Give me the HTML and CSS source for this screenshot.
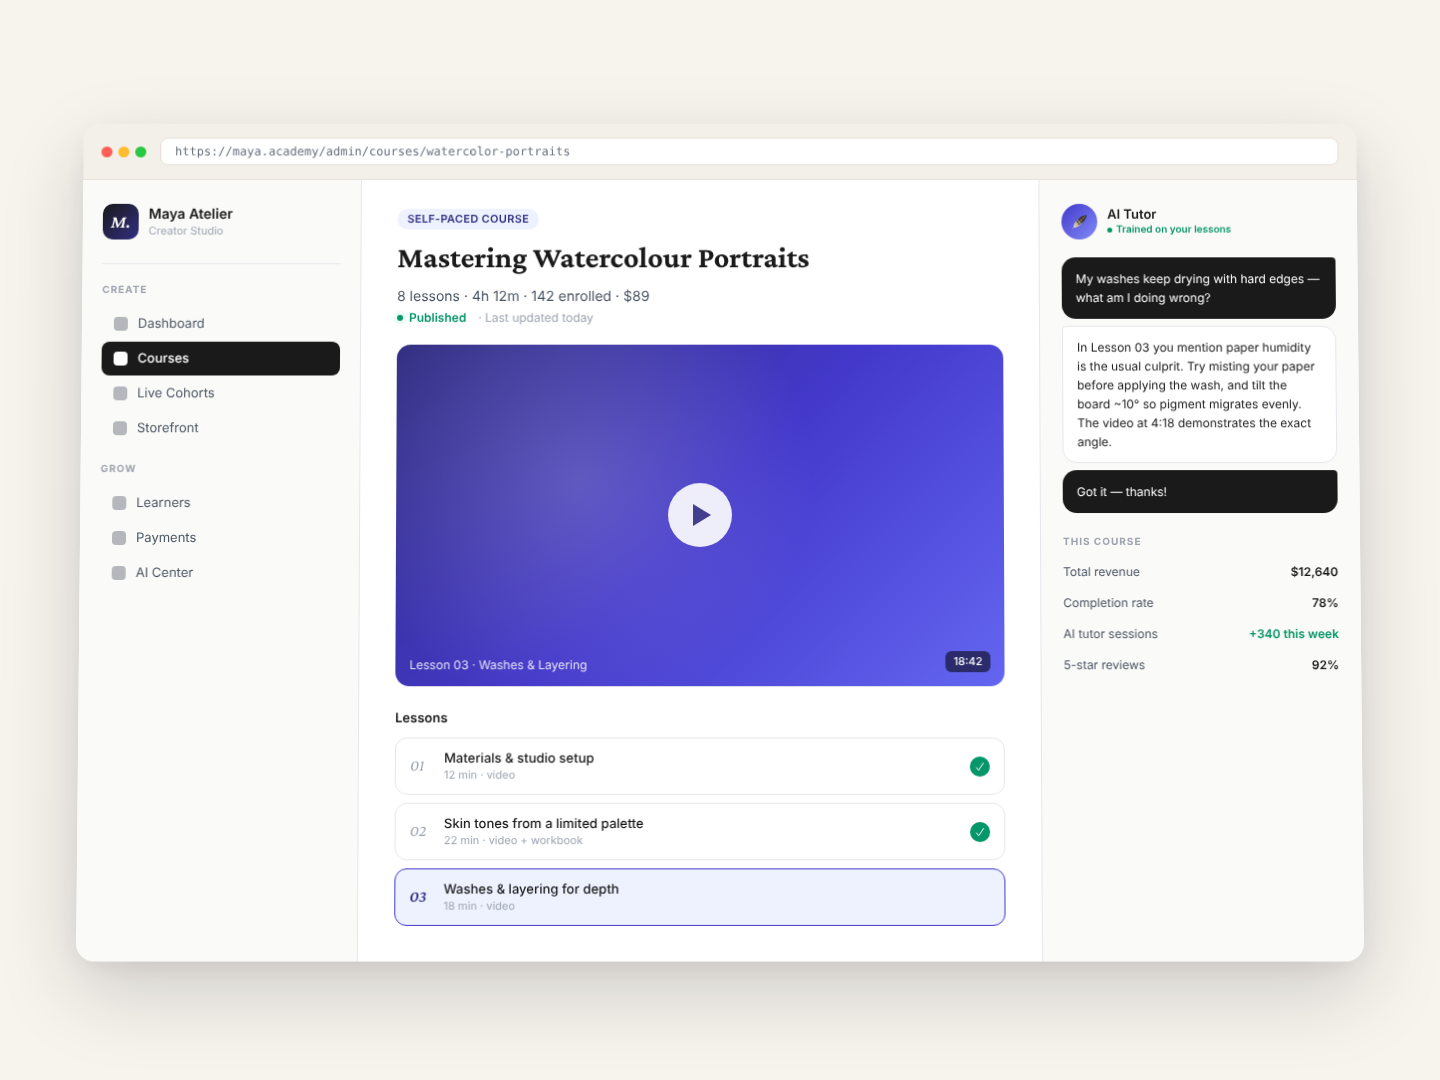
FILE: index.html
```html
<!DOCTYPE html>
<html lang="en">
<head>
<meta charset="utf-8">
<meta name="viewport" content="width=device-width, initial-scale=1">
<title>Maya Atelier – Courses</title>
<link rel="stylesheet" href="styles.css">
</head>
<body>
<div class="window">
  <header class="toolbar">
    <div class="lights"><span class="light light-close"></span><span class="light light-min"></span><span class="light light-max"></span></div>
    <input class="address" type="text" aria-label="Address" value="https://maya.academy/admin/courses/watercolor-portraits">
  </header>
  <div class="columns">
    <aside class="sidebar">
      <div class="brand">
        <div class="logo">M.</div>
        <div class="brand-text">
          <div class="brand-name">Maya Atelier</div>
          <div class="brand-sub">Creator Studio</div>
        </div>
      </div>
      <nav class="nav">
        <h2 class="eyebrow">Create</h2>
        <a class="nav-item" href="#"><span class="nav-icon"></span>Dashboard</a>
        <a class="nav-item active" href="#" aria-current="page"><span class="nav-icon"></span>Courses</a>
        <a class="nav-item" href="#"><span class="nav-icon"></span>Live Cohorts</a>
        <a class="nav-item" href="#"><span class="nav-icon"></span>Storefront</a>
        <h2 class="eyebrow">Grow</h2>
        <a class="nav-item" href="#"><span class="nav-icon"></span>Learners</a>
        <a class="nav-item" href="#"><span class="nav-icon"></span>Payments</a>
        <a class="nav-item" href="#"><span class="nav-icon"></span>AI Center</a>
      </nav>
    </aside>
    <main class="course">
      <span class="tag">SELF-PACED COURSE</span>
      <h1 class="title">Mastering Watercolour Portraits</h1>
      <p class="facts">8 lessons · 4h 12m · 142 enrolled · $89</p>
      <p class="status"><span class="dot"></span><strong class="published">Published</strong><span class="updated">· Last updated today</span></p>
      <div class="video">
        <button class="play" type="button" aria-label="Play lesson">
          <svg width="18" height="22" viewBox="0 0 18 22" aria-hidden="true"><path d="M0 0L18 11L0 22Z" fill="#423e88"/></svg>
        </button>
        <div class="caption">
          <span class="caption-title">Lesson 03 · Washes &amp; Layering</span>
          <span class="duration">18:42</span>
        </div>
      </div>
      <h2 class="lessons-title">Lessons</h2>
      <ol class="lessons">
        <li class="lesson">
          <span class="num">01</span>
          <div class="lesson-text"><div class="lesson-name">Materials &amp; studio setup</div><div class="lesson-meta">12 min · video</div></div>
          <span class="check"><svg width="10" height="10" viewBox="0 0 10 10" aria-hidden="true"><path d="M1.2 5.6L3.7 8.6L8.6 1.2" fill="none" stroke="#fff" stroke-width="1"/></svg></span>
        </li>
        <li class="lesson">
          <span class="num">02</span>
          <div class="lesson-text"><div class="lesson-name">Skin tones from a limited palette</div><div class="lesson-meta">22 min · video + workbook</div></div>
          <span class="check"><svg width="10" height="10" viewBox="0 0 10 10" aria-hidden="true"><path d="M1.2 5.6L3.7 8.6L8.6 1.2" fill="none" stroke="#fff" stroke-width="1"/></svg></span>
        </li>
        <li class="lesson current">
          <span class="num">03</span>
          <div class="lesson-text"><div class="lesson-name">Washes &amp; layering for depth</div><div class="lesson-meta">18 min · video</div></div>
        </li>
      </ol>
    </main>
    <aside class="tutor">
      <div class="tutor-head">
        <div class="avatar">
          <svg width="16" height="16" viewBox="0 0 16 16" aria-hidden="true">
            <defs>
              <linearGradient id="quill" x1="1" y1="0" x2="0" y2="1">
                <stop offset="0" stop-color="#1c1917"/>
                <stop offset="0.4" stop-color="#4a3d33"/>
                <stop offset="0.65" stop-color="#b0a595"/>
                <stop offset="1" stop-color="#e8e4dc"/>
              </linearGradient>
            </defs>
            <path d="M15.4 1.2C12 1.4 8.6 3.4 5.6 6.6C3.4 9 1.8 11.4 2.2 13.8C4.6 14.2 7.4 13 10 10.4C13 7.4 15 4.6 15.4 1.2Z" fill="url(#quill)"/>
            <path d="M7.4 5.2L10.4 9.2M5.6 7.2L8 11M9.6 3.6L12 7.2" stroke="#1c1917" stroke-width="1" fill="none"/>
            <path d="M14 2.4L0.8 15.4" stroke="#c9b48c" stroke-width="0.7" fill="none"/>
          </svg>
        </div>
        <div>
          <div class="tutor-name">AI Tutor</div>
          <div class="tutor-status"><span class="tutor-dot"></span>Trained on your lessons</div>
        </div>
      </div>
      <div class="chat">
        <p class="bubble mine">My washes keep drying with hard edges — what am I doing wrong?</p>
        <p class="bubble theirs">In Lesson 03 you mention paper humidity is the usual culprit. Try misting your paper before applying the wash, and tilt the board ~10° so pigment migrates evenly. The video at 4:18 demonstrates the exact angle.</p>
        <p class="bubble mine">Got it — thanks!</p>
      </div>
      <h2 class="eyebrow stats-title">This course</h2>
      <dl class="stats">
        <div class="stat"><dt>Total revenue</dt><dd>$12,640</dd></div>
        <div class="stat"><dt>Completion rate</dt><dd>78%</dd></div>
        <div class="stat"><dt>AI tutor sessions</dt><dd class="up">+340 this week</dd></div>
        <div class="stat"><dt>5-star reviews</dt><dd>92%</dd></div>
      </dl>
    </aside>
  </div>
</div>
</body>
</html>
```
FILE: styles.css
```css
:root {
  --ink: #1a1a1a;
  --slate: #4b5563;
  --muted: #9ca3af;
  --line: #e5e7eb;
  --indigo: #312e81;
  --violet: #4338ca;
  --tint: #eef2ff;
  --green: #059669;
  --serif: "Crimson Pro", "Crimson Text", "Liberation Serif", serif;
}
* { box-sizing: border-box; margin: 0; padding: 0; }
body {
  min-height: 100vh;
  display: flex;
  align-items: center;
  justify-content: center;
  padding: 80px;
  background: #f7f4ed;
  color: var(--ink);
  font-family: Inter, "Liberation Sans", sans-serif;
  font-size: 13px;
  text-rendering: geometricPrecision;
}
.window {
  width: 100%;
  max-width: 1280px;
  background: #fff;
  border-radius: 18px;
  overflow: hidden;
  transform: perspective(2400px) rotateX(2deg);
  box-shadow: 0 30px 80px rgba(26, 26, 46, .18), 0 8px 24px rgba(26, 26, 46, .06);
}
.toolbar {
  display: flex;
  align-items: center;
  gap: 14px;
  padding: 14px 18px;
  background: #f3efe9;
  border-bottom: 1px solid #e5e0d5;
}
.lights { display: flex; gap: 6px; }
.light { width: 11px; height: 11px; border-radius: 50%; }
.light-close { background: #ff5f57; }
.light-min { background: #febc2e; }
.light-max { background: #28c840; }
.address {
  flex: 1;
  min-width: 0;
  height: 28px;
  padding: 0 14px;
  border: 1px solid #e5e0d5;
  border-radius: 8px;
  background: #fff;
  color: #6b7280;
  font-family: "DejaVu Sans Mono", monospace;
  font-size: 12px;
  text-rendering: inherit;
}
.columns { display: grid; grid-template-columns: 280px minmax(0, 1fr) 320px; }

.sidebar { padding: 24px 20px; background: #fafaf8; border-right: 1px solid var(--line); }
.brand { display: flex; align-items: center; gap: 10px; padding-bottom: 24px; border-bottom: 1px solid var(--line); }
.logo {
  display: grid;
  place-items: center;
  width: 36px;
  height: 36px;
  border-radius: 10px;
  background: linear-gradient(135deg, #1a1a1a, #312e81);
  color: #fff;
  font: italic 600 18px/20px var(--serif);
}
.brand-name { font-size: 14px; line-height: 17px; font-weight: 600; }
.brand-sub { font-size: 11px; line-height: 16px; color: var(--muted); }
.nav { display: flex; flex-direction: column; gap: 1px; padding-top: 20px; }
.eyebrow { font-size: 10px; line-height: 12px; font-weight: 700; letter-spacing: 1px; text-transform: uppercase; color: var(--muted); }
.nav .eyebrow { margin-bottom: 10px; }
.nav-item + .eyebrow { margin-top: 17px; }
.nav-item {
  display: flex;
  align-items: center;
  gap: 10px;
  height: 34px;
  padding: 0 12px;
  border-radius: 8px;
  color: var(--slate);
  font-size: 13px;
  text-decoration: none;
}
.nav-icon { width: 14px; height: 14px; border-radius: 4px; background: currentColor; opacity: .4; }
.nav-item.active { background: var(--ink); color: #fff; font-weight: 500; }
.active .nav-icon { opacity: 1; }

.course { padding: 29px 36px 35px; background: #fff; }
.tag {
  display: inline-block;
  padding: 4px 10px;
  border-radius: 999px;
  background: var(--tint);
  color: var(--indigo);
  font-size: 11px;
  line-height: 13px;
  font-weight: 600;
  letter-spacing: .03em;
}
.title { margin-top: 12px; font: 700 30px/34px var(--serif); }
.facts { margin-top: 12px; font-size: 14px; line-height: 20px; color: var(--slate); }
.status { display: flex; align-items: center; margin-top: 3px; font-size: 12px; line-height: 16px; }
.dot { width: 6px; height: 6px; margin-right: 6px; border-radius: 50%; background: var(--green); box-shadow: 0 0 0 4px #ecfdf5; }
.published { color: var(--green); font-weight: 600; }
.updated { margin-left: 12px; color: var(--muted); }
.video {
  display: grid;
  place-items: center;
  position: relative;
  margin-top: 19px;
  aspect-ratio: 16 / 9;
  border-radius: 14px;
  background:
    radial-gradient(circle at 30% 40%, rgba(255, 255, 255, .18), transparent 50%),
    linear-gradient(135deg, #312e81 0%, #4338ca 50%, #6366f1 100%);
}
.play {
  display: grid;
  place-items: center;
  width: 64px;
  height: 64px;
  padding-left: 4px;
  border: 0;
  border-radius: 50%;
  background: #fff;
  opacity: .9;
}
.caption {
  position: absolute;
  right: 14px;
  bottom: 14px;
  left: 14px;
  display: flex;
  align-items: flex-end;
  justify-content: space-between;
  color: #fff;
  font-size: 12px;
  line-height: 15px;
}
.caption-title { opacity: .85; }
.duration { padding: 3px 8px; border-radius: 6px; background: rgba(0, 0, 0, .55); font-size: 11px; font-weight: 500; }
.lessons-title { margin-top: 24px; font-size: 13px; line-height: 16px; font-weight: 600; }
.lessons { display: flex; flex-direction: column; gap: 8px; margin-top: 11px; list-style: none; }
.lesson {
  display: flex;
  align-items: center;
  gap: 14px;
  padding: 12px 14px;
  border: 1px solid var(--line);
  border-radius: 12px;
}
.num { width: 20px; color: var(--muted); font: italic 400 16px/20px var(--serif); }
.lesson-text { flex: 1; }
.lesson-name { font-size: 13px; line-height: 17px; font-weight: 500; }
.lesson-meta { font-size: 11px; line-height: 14px; color: var(--muted); }
.check { display: grid; place-items: center; width: 20px; height: 20px; border-radius: 50%; background: var(--green); }
.lesson.current { border-color: var(--violet); background: var(--tint); }
.current .num { color: var(--indigo); font-weight: 600; }

.tutor { padding: 24px 22px; background: #fafaf8; border-left: 1px solid var(--line); }
.tutor-head { display: flex; align-items: center; gap: 10px; }
.avatar {
  display: grid;
  place-items: center;
  width: 36px;
  height: 36px;
  border-radius: 50%;
  background: linear-gradient(135deg, #4338ca, #818cf8);
}
.tutor-name { font-size: 13px; line-height: 16px; font-weight: 600; }
.tutor-status { display: flex; align-items: center; gap: 4px; font-size: 10px; line-height: 14px; font-weight: 600; color: var(--green); }
.tutor-dot { width: 5px; height: 5px; border-radius: 50%; background: currentColor; }
.chat { display: flex; flex-direction: column; gap: 7px; margin-top: 18px; }
.bubble { padding: 11px 14px; border-radius: 14px; font-size: 12px; line-height: 19px; }
.mine { padding: 12px 14px; background: var(--ink); color: #fff; border-top-right-radius: 4px; }
.theirs { background: #fff; border: 1px solid var(--line); border-top-left-radius: 4px; }
.stats-title { margin-top: 23px; }
.stats { margin-top: 8px; }
.stat { display: flex; justify-content: space-between; padding: 8px 0; font-size: 12px; line-height: 15px; }
.stat dt { color: var(--slate); }
.stat dd { font-weight: 600; }
.stat .up { color: var(--green); }
```
